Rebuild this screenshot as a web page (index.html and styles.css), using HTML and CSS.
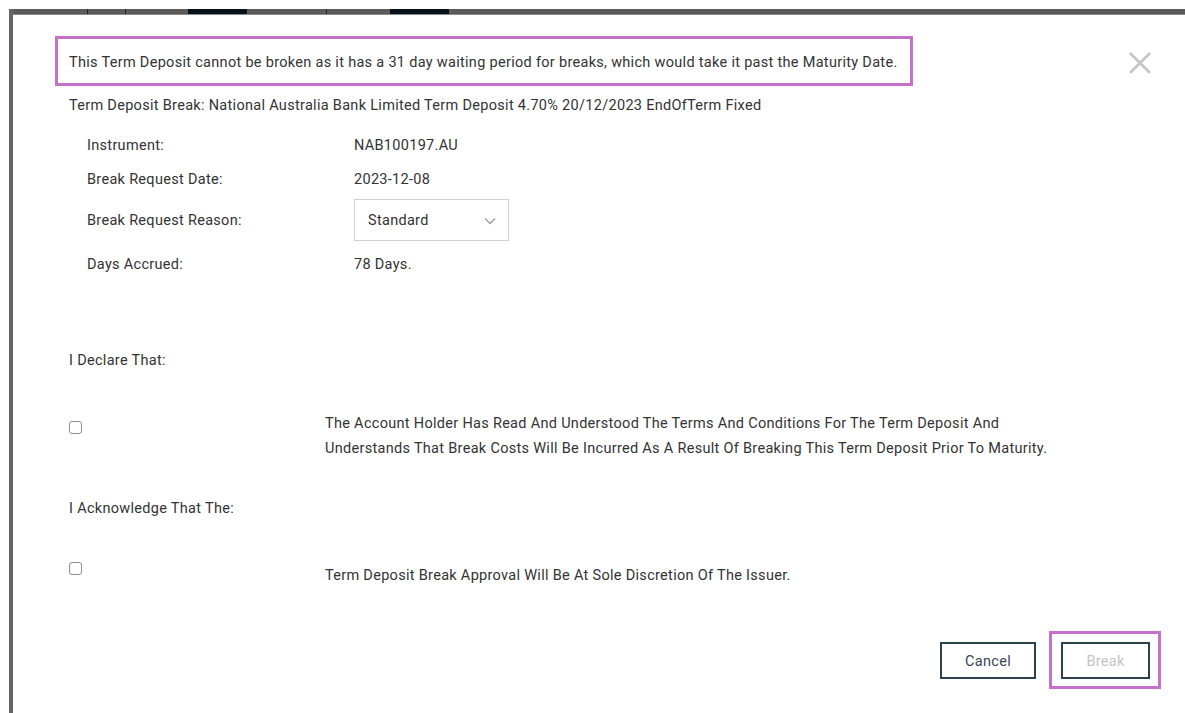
FILE: index.html
```html
<!DOCTYPE html>
<html lang="en">
<head>
<meta charset="utf-8">
<title>Term Deposit Break</title>
<link rel="stylesheet" href="styles.css">
</head>
<body>
<div class="screen">
  <div class="app-bar">
    <span class="seg seg-a"></span>
    <span class="seg seg-b"></span>
    <span class="seg seg-c"></span>
    <span class="seg seg-dark seg-d"></span>
    <span class="seg seg-e"></span>
    <span class="seg seg-f"></span>
    <span class="seg seg-dark seg-g"></span>
    <span class="seg seg-rest"></span>
  </div>
  <div class="dialog">
    <div class="dialog-head">
      <div class="notice">This Term Deposit cannot be broken as it has a 31 day waiting period for breaks, which would take it past the Maturity Date.</div>
      <button class="close" type="button" aria-label="Close">
        <svg width="24" height="24" viewBox="0 0 24 24"><path d="M2 2L22 22M22 2L2 22" stroke="#c4c4c4" stroke-width="2.6" fill="none"/></svg>
      </button>
    </div>
    <div class="dialog-body">
      <p class="subtitle">Term Deposit Break: National Australia Bank Limited Term Deposit 4.70% 20/12/2023 EndOfTerm Fixed</p>
      <div class="details">
        <div class="detail detail-sm"><span class="label">Instrument:</span><span class="value">NAB100197.AU</span></div>
        <div class="detail detail-sm"><span class="label">Break Request Date:</span><span class="value">2023-12-08</span></div>
        <div class="detail detail-lg"><span class="label">Break Request Reason:</span>
          <div class="select"><span>Standard</span>
            <svg width="12" height="8" viewBox="0 0 12 8"><path d="M1 1.5L6 6.5L11 1.5" stroke="#9a9a9a" stroke-width="1.3" fill="none"/></svg>
          </div>
        </div>
        <div class="detail detail-md"><span class="label">Days Accrued:</span><span class="value">78 Days.</span></div>
      </div>

      <p class="section-title section-declare">I Declare That:</p>
      <label class="check-row check-row-first">
        <span class="box"></span>
        <span class="check-text">The Account Holder Has Read And Understood The Terms And Conditions For The Term Deposit And<br>Understands That Break Costs Will Be Incurred As A Result Of Breaking This Term Deposit Prior To Maturity.</span>
      </label>

      <p class="section-title section-ack">I Acknowledge That The:</p>
      <label class="check-row check-row-second">
        <span class="box"></span>
        <span class="check-text">Term Deposit Break Approval Will Be At Sole Discretion Of The Issuer.</span>
      </label>
    </div>
    <div class="dialog-foot">
      <button class="btn" type="button">Cancel</button>
      <div class="highlight">
        <button class="btn btn-disabled" type="button" disabled>Break</button>
      </div>
    </div>
  </div>
</div>
</body>
</html>
```

FILE: styles.css
```css
* { box-sizing: border-box; }

html, body {
  margin: 0;
  background: #fff;
}

body {
  font-family: Roboto, "Noto Sans", sans-serif;
  font-stretch: 92%;
  font-size: 14.5px;
  letter-spacing: 0.3px;
  color: #333;
}

.screen {
  height: 704px;
  margin: 9px 0 0 9px;
  border-left: 4px solid #666;
  display: flex;
  flex-direction: column;
  overflow: hidden;
}

/* strip of the application behind the dialog */
.app-bar {
  height: 6px;
  display: flex;
  margin-left: -4px;
  border-bottom: 1px solid #8a8a8a;
  background: #5b5b5b;
}
.seg { height: 100%; background: #5b5b5b; border-right: 1px solid #1c242c; }
.seg-a { width: 79px; }
.seg-b { width: 38px; }
.seg-c { width: 62px; border-right: 0; }
.seg-dark { background: #07111a; border-right: 0; }
.seg-d { width: 59px; }
.seg-e { width: 80px; }
.seg-f { width: 63px; border-right: 0; }
.seg-g { width: 59px; }
.seg-rest { flex: 1; border-right: 0; }

.dialog {
  flex: 1;
  display: flex;
  flex-direction: column;
  padding: 21px 24px 0 42px;
}

.dialog-head {
  display: flex;
  align-items: center;
  justify-content: space-between;
}

.notice {
  width: 858px;
  height: 50px;
  border: 3px solid #c671c9;
  padding: 3px 0 0 11px;
  display: flex;
  align-items: center;
  white-space: nowrap;
}

.close {
  border: 0;
  background: none;
  padding: 0;
  margin: 3px 9px 0 0;
  display: flex;
}

.dialog-body {
  padding-left: 14px;
}

.subtitle {
  margin: 10px 0 0;
  line-height: 20px;
}

.details {
  margin-top: 12px;
  padding-left: 18px;
}
.detail {
  display: grid;
  grid-template-columns: 267px auto;
  align-items: center;
}
.detail-sm { height: 34px; }
.detail-lg { height: 48px; }
.detail-md { height: 40px; }

.select {
  width: 155px;
  height: 42px;
  border: 1px solid #d4d0cc;
  display: flex;
  align-items: center;
  justify-content: space-between;
  padding: 1px 12px 0 13px;
}

.section-title {
  margin: 0;
  line-height: 20px;
}
.section-declare { margin-top: 67px; }
.section-ack { margin-top: 38px; }

.check-row {
  display: grid;
  grid-template-columns: 256px auto;
  align-items: start;
  line-height: 25px;
}
.check-row-first { margin-top: 40px; }
.check-row-second { margin-top: 44px; }

.box {
  width: 13px;
  height: 13px;
  border: 1px solid #8f8f8f;
  border-radius: 3px;
  background: #fff;
}
.check-row-first .box { margin-top: 10px; }
.check-row-second .box { margin-top: -1px; }

.dialog-foot {
  margin-top: auto;
  margin-bottom: 24px;
  display: flex;
  justify-content: flex-end;
  align-items: center;
  gap: 13px;
}

.btn {
  font: inherit;
  letter-spacing: inherit;
  color: #3b4656;
  background: #fff;
  border: 2px solid #2c4250;
  width: 96px;
  height: 37px;
  padding: 2px 0 0;
}

.btn-disabled {
  width: 89px;
  color: #c4c4c4;
}

.highlight {
  border: 3px solid #c671c9;
  padding: 8px 8px 7px 9px;
}
```
